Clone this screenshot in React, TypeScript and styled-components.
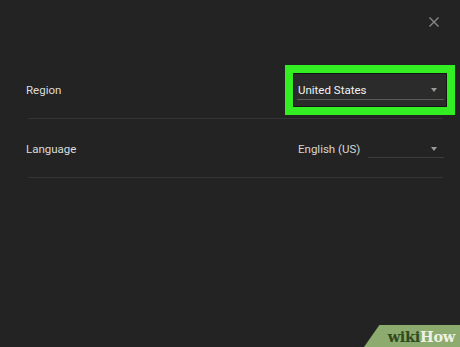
import React from "react"
import styled, { createGlobalStyle } from "styled-components"

const GlobalStyle = createGlobalStyle`
  html, body {
    margin: 0;
    padding: 0;
    background: #232323;
  }
  body {
    font-family: Roboto, "Liberation Sans", sans-serif;
  }
`

const Page = styled.div`
  position: relative;
  width: 460px;
  height: 347px;
  box-sizing: border-box;
  background: #232323;
  padding: 0 17px 0 26px;
  overflow: hidden;
`

const Header = styled.div`
  height: 60px;
  display: flex;
  justify-content: flex-end;
  align-items: flex-start;
  padding: 16px 3px 0 0;
  box-sizing: border-box;
`

const CloseButton = styled.button`
  width: 12px;
  height: 12px;
  padding: 0;
  border: none;
  background: transparent;
  display: flex;
  cursor: pointer;
`

const Row = styled.div`
  height: 59px;
  display: flex;
  align-items: center;
  justify-content: space-between;
  border-bottom: 1px solid #343434;
  box-sizing: border-box;
  margin-left: 2px;
  padding-top: 2px;
`

const Label = styled.span`
  font-size: 11.5px;
  color: #dcdcdc;
  margin-left: -2px;
`

const Select = styled.div<{ highlighted?: boolean; lineFrom?: number }>`
  position: relative;
  width: 152px;
  height: 32px;
  margin-right: -3px;
  box-sizing: border-box;
  display: flex;
  align-items: center;
  padding: 0 9px 0 4px;
  background: ${({ highlighted }) => (highlighted ? "#2b2b2b" : "transparent")};
  box-shadow: ${({ highlighted }) =>
    highlighted ? "0 0 0 1px #151515, 0 0 0 9px #33ee22" : "none"};
  &::after {
    content: "";
    position: absolute;
    left: ${({ lineFrom }) => lineFrom ?? 3}px;
    right: 2px;
    bottom: ${({ highlighted }) => (highlighted ? 6 : 7)}px;
    height: 1px;
    background: ${({ highlighted }) => (highlighted ? "#5a5a5a" : "#3c3c3c")};
  }
`

const Value = styled.span<{ bright?: boolean }>`
  font-size: 11.5px;
  color: ${({ bright }) => (bright ? "#f2f2f2" : "#d6d6d6")};
  margin-top: -1px;
`

const Arrow = styled.span`
  margin-left: auto;
  width: 0;
  height: 0;
  border-left: 3.5px solid transparent;
  border-right: 3.5px solid transparent;
  border-top: 4px solid #9a9a9a;
`

const Badge = styled.div`
  position: absolute;
  right: 0;
  bottom: 0;
  width: 96px;
  height: 22px;
  background: #8dab6e;
  clip-path: polygon(16% 0, 100% 0, 100% 100%, 0 100%);
  display: flex;
  align-items: center;
  justify-content: flex-end;
  padding-right: 5px;
  box-sizing: border-box;
  font-family: "DejaVu Serif", "Liberation Serif", serif;
  font-weight: bold;
  font-size: 14.5px;
  letter-spacing: -0.3px;
`

const Wiki = styled.span`
  color: #2f4a22;
`

const How = styled.span`
  color: #eef2e6;
`

export default function App() {
  return (
    <>
      <GlobalStyle />
      <Page>
        <Header>
          <CloseButton aria-label="Close">
            <svg width="12" height="12" viewBox="0 0 12 12">
              <path d="M1.5 1.5 L10.5 10.5 M10.5 1.5 L1.5 10.5" stroke="#8a8a8a" strokeWidth="1.3" />
            </svg>
          </CloseButton>
        </Header>
        <Row>
          <Label>Region</Label>
          <Select highlighted>
            <Value bright>United States</Value>
            <Arrow />
          </Select>
        </Row>
        <Row>
          <Label>Language</Label>
          <Select lineFrom={74}>
            <Value>English (US)</Value>
            <Arrow />
          </Select>
        </Row>
        <Badge>
          <Wiki>wiki</Wiki>
          <How>How</How>
        </Badge>
      </Page>
    </>
  )
}
